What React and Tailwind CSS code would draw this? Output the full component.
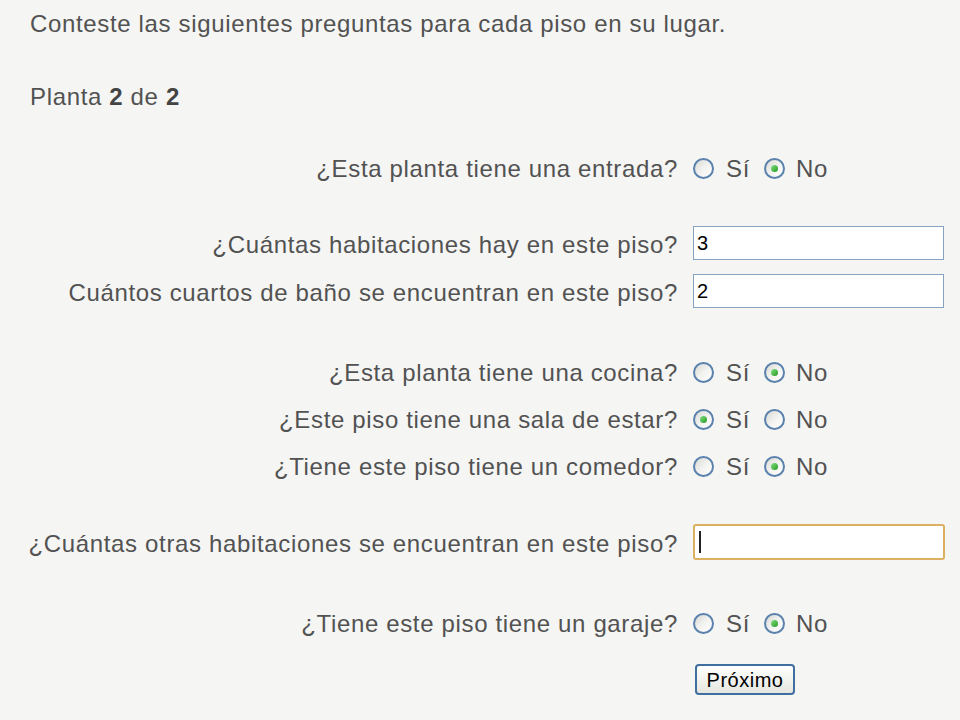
import React from "react";

function Radio({ checked }) {
  return (
    <span className="relative inline-flex h-[21px] w-[21px] shrink-0 items-center justify-center rounded-full border-[2px] border-[#5a82ad] bg-gradient-to-br from-[#d8d8d4] via-[#f2f2f0] to-[#ffffff]">
      {checked && (
        <span className="h-[7px] w-[7px] rounded-full bg-gradient-to-br from-[#7fe07f] to-[#1c9a1c]" />
      )}
    </span>
  );
}

function RadioRow({ label, si }) {
  return (
    <div className="grid h-[47px] grid-cols-[678px_1fr] items-center gap-x-[15px]">
      <div className="whitespace-nowrap text-right">{label}</div>
      <div className="flex items-center">
        <Radio checked={si} />
        <span className="ml-[12px] w-[38px]">Sí</span>
        <Radio checked={!si} />
        <span className="ml-[11px]">No</span>
      </div>
    </div>
  );
}

function InputRow({ label, value, focused }) {
  return (
    <div className="grid h-[48px] grid-cols-[678px_1fr] items-center gap-x-[15px]">
      <div className="whitespace-nowrap pt-[4px] text-right">{label}</div>
      <div className="flex items-center">
        {focused ? (
          <div className="flex h-[36px] w-[252px] items-center rounded-[3px] border-[2px] border-[#dcb062] bg-white pl-[4px]">
            <span className="h-[22px] w-[2px] bg-[#222]" />
          </div>
        ) : (
          <div className="flex h-[34px] w-[251px] items-center border border-[#86a3c4] bg-white pl-[3px] text-[20px] tracking-normal text-black">
            {value}
          </div>
        )}
      </div>
    </div>
  );
}

export default function App() {
  return (
    <div
      className="min-h-[720px] w-[960px] bg-[#f5f5f4] text-[24px] leading-[26px] tracking-[0.65px] text-[#525252]"
      style={{ fontFamily: '"Liberation Sans", Arial, sans-serif' }}
    >
      <div className="pt-[11px] pl-[30px]">
        Conteste las siguientes preguntas para cada piso en su lugar.
      </div>
      <div className="mt-[47px] pl-[30px]">
        Planta <b className="text-[#444]">2</b> de <b className="text-[#444]">2</b>
      </div>

      <div className="mt-[35px]">
        <RadioRow label="¿Esta planta tiene una entrada?" si={false} />
      </div>
      <div className="mt-[27px]">
        <InputRow label="¿Cuántas habitaciones hay en este piso?" value="3" />
        <InputRow label="Cuántos cuartos de baño se encuentran en este piso?" value="2" />
      </div>
      <div className="mt-[34px]">
        <RadioRow label="¿Esta planta tiene una cocina?" si={false} />
        <RadioRow label="¿Este piso tiene una sala de estar?" si={true} />
        <RadioRow label="¿Tiene este piso tiene un comedor?" si={false} />
      </div>
      <div className="mt-[28px]">
        <InputRow label="¿Cuántas otras habitaciones se encuentran en este piso?" focused />
      </div>
      <div className="mt-[34px]">
        <RadioRow label="¿Tiene este piso tiene un garaje?" si={false} />
      </div>
      <div className="mt-[17px] pl-[695px]">
        <button className="h-[31px] w-[100px] rounded-[4px] border-[2px] border-[#3f6e9f] bg-gradient-to-b from-[#ffffff] to-[#e6e6e0] text-[20px] leading-[20px] tracking-[0.5px] text-black">
          Próximo
        </button>
      </div>
    </div>
  );
}
